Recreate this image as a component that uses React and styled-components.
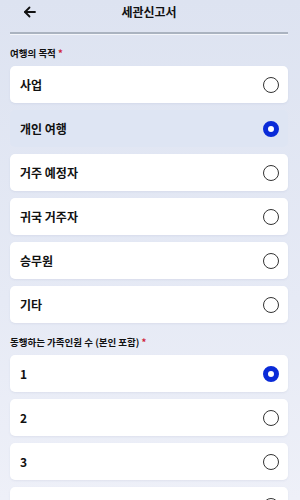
import React, { useState } from 'react'
import styled, { createGlobalStyle } from 'styled-components'

const GlobalStyle = createGlobalStyle`
  html, body {
    margin: 0;
    padding: 0;
  }
  body {
    font-family: "Noto Sans CJK KR", "Noto Sans", sans-serif;
    background: linear-gradient(180deg, #dde3f1 0%, #e6eaf5 60%, #eef0f8 100%);
    min-height: 500px;
    color: #111;
  }
`

const Page = styled.div`
  width: 300px;
  height: 500px;
  overflow: hidden;
  padding: 0 12px 0 10px;
  box-sizing: border-box;
`

const Header = styled.div`
  display: grid;
  grid-template-columns: 40px 1fr 40px;
  align-items: start;
  height: 32px;
  margin-bottom: 8px;
  border-bottom: 2px solid #aab3c0;
  box-shadow: 0 1px 0 #f4f6fb;
`

const BackButton = styled.button`
  background: none;
  border: none;
  padding: 0;
  margin: 5px 0 0 13px;
  width: 14px;
  height: 14px;
  display: flex;
  cursor: pointer;
`

const Title = styled.h1`
  margin: 3px 0 0;
  font-size: 12px;
  font-weight: 700;
  text-align: center;
  line-height: 18px;
`

const SectionLabel = styled.div`
  font-size: 9.5px;
  font-weight: 700;
  margin: 12px 0 6px;
  line-height: 14px;

  span {
    color: #d0243a;
  }
`

const Options = styled.div`
  display: flex;
  flex-direction: column;
  gap: 7px;
`

const Option = styled.label`
  display: flex;
  align-items: center;
  justify-content: space-between;
  height: 37px;
  padding: 0 9px 0 10px;
  border-radius: 5px;
  background: ${p => (p.$selected && p.$tinted ? '#dee5f3' : '#ffffff')};
  box-shadow: ${p => (p.$selected && p.$tinted ? 'none' : '0 1px 2px rgba(120, 135, 170, 0.12)')};
  cursor: pointer;
`

const OptionText = styled.span`
  font-size: 12px;
  font-weight: 700;
`

const Radio = styled.span`
  width: 16px;
  height: 16px;
  border-radius: 50%;
  box-sizing: border-box;
  border: ${p => (p.$checked ? '5px solid #0a2bd8' : '1.5px solid #333')};
  background: #fff;
`

const purposes = ['사업', '개인 여행', '거주 예정자', '귀국 거주자', '승무원', '기타']
const counts = ['1', '2', '3', '4']

function BackArrow() {
  return (
    <svg width="14" height="14" viewBox="0 0 14 14" fill="none" stroke="#111" strokeWidth="1.8" strokeLinecap="round" strokeLinejoin="round">
      <path d="M12 7H2" />
      <path d="M6.5 2.5L2 7l4.5 4.5" />
    </svg>
  )
}

export default function App() {
  const [purpose, setPurpose] = useState('개인 여행')
  const [count, setCount] = useState('1')

  return (
    <>
      <GlobalStyle />
      <Page>
        <Header>
          <BackButton aria-label="뒤로"><BackArrow /></BackButton>
          <Title>세관신고서</Title>
          <div />
        </Header>

        <SectionLabel>여행의 목적 <span>*</span></SectionLabel>
        <Options>
          {purposes.map(p => (
            <Option key={p} $selected={purpose === p} $tinted onClick={() => setPurpose(p)}>
              <OptionText>{p}</OptionText>
              <Radio $checked={purpose === p} />
            </Option>
          ))}
        </Options>

        <SectionLabel>동행하는 가족인원 수 (본인 포함) <span>*</span></SectionLabel>
        <Options>
          {counts.map(c => (
            <Option key={c} $selected={count === c} onClick={() => setCount(c)}>
              <OptionText>{c}</OptionText>
              <Radio $checked={count === c} />
            </Option>
          ))}
        </Options>
      </Page>
    </>
  )
}
